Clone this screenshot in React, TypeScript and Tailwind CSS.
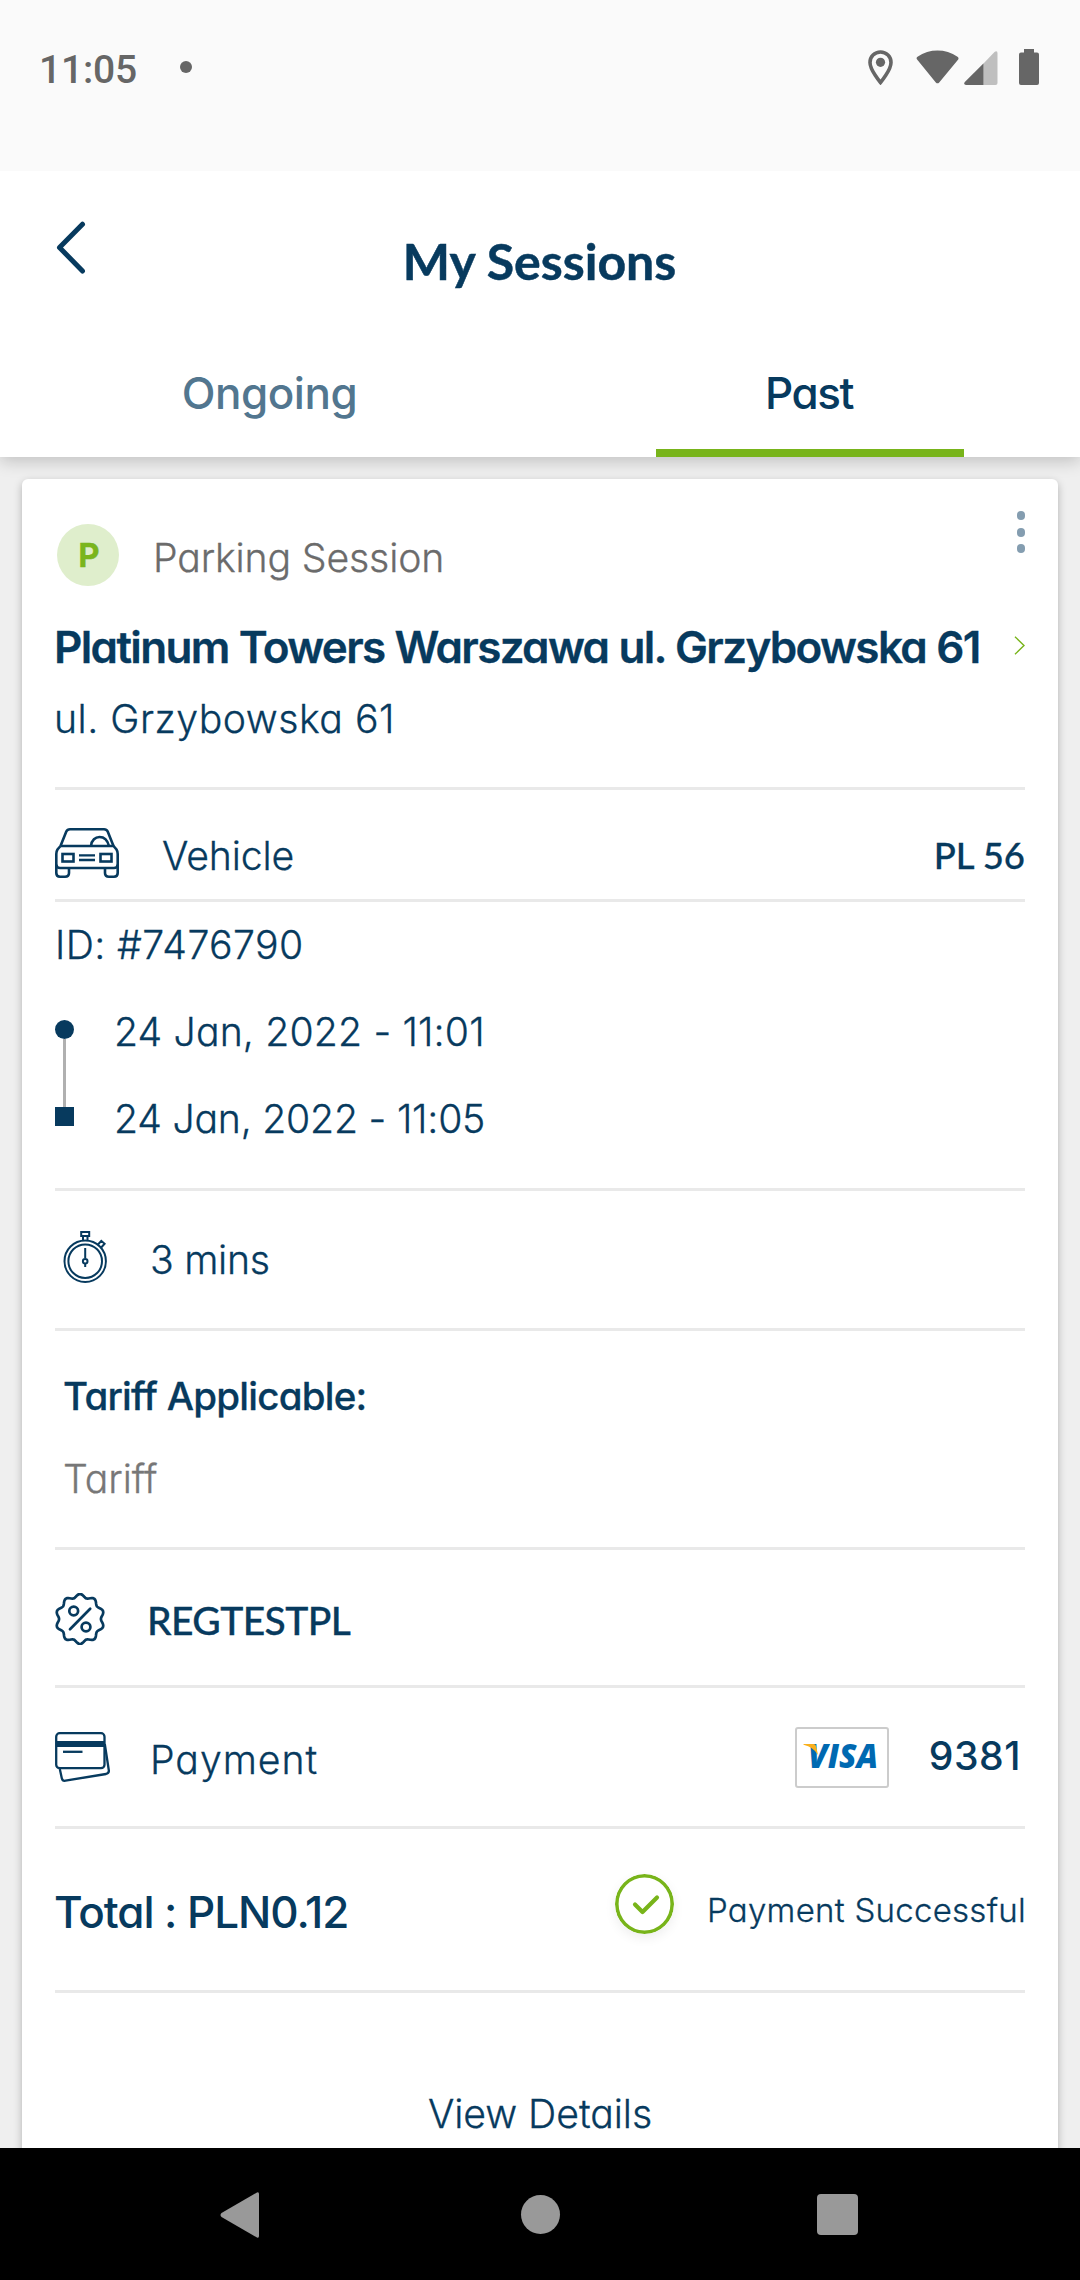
import type { ReactNode } from "react";

const badgePath =
  Array.from({ length: 121 }, (_, i) => {
    const a = (i / 120) * Math.PI * 2;
    const r = 22.6 + 1.7 * Math.cos(10 * a);
    const x = 25 + r * Math.sin(a);
    const y = 26 - r * 1.03 * Math.cos(a);
    return `${i === 0 ? "M" : "L"}${x.toFixed(2)} ${y.toFixed(2)}`;
  }).join("") + "Z";

function StatusBar() {
  return (
    <div className="flex h-[171px] items-start bg-[#fafafa] pl-[39px] pr-[41px] pt-[46px] text-[#666666]">
      <span className="font-['Roboto',sans-serif] text-[39px] font-medium leading-[48px] tracking-[-0.2px]">11:05</span>
      <span className="ml-[43px] mt-[15px] h-3 w-3 rounded-full bg-[#666666]" />
      <svg className="ml-auto mt-1" width="25" height="35" viewBox="0 0 25 35" fill="none">
        <path d="M12.5 2C6.6 2 2 6.6 2 12.4C2 20 12.5 32.5 12.5 32.5S23 20 23 12.4C23 6.6 18.4 2 12.5 2Z" stroke="#666666" strokeWidth="3.6" />
        <circle cx="12.5" cy="12.3" r="4.6" fill="#666666" />
      </svg>
      <svg className="ml-[23px] mt-1" width="43" height="34" viewBox="0 0 43 34" fill="#666666">
        <path d="M1.5 10Q-.4 8.2 1.5 6.8C7.5 2.5 14.5.6 21.5.6S35.5 2.5 41.5 6.8Q43.4 8.2 41.8 10L23.2 32.5Q21.5 34.2 19.8 32.5Z" />
      </svg>
      <svg className="ml-[5px] mt-[5px]" width="34" height="34" viewBox="0 0 34 34">
        <path d="M19 13L30.5 1Q33.5-.8 33.5 2.5V32Q33.5 34 31.5 34H19Z" fill="#bfbfbf" />
        <path d="M19.4 12.5V34H2Q-.8 33.5.8 31Z" fill="#666666" />
      </svg>
      <svg className="ml-[21px] mt-[3px]" width="20" height="36" viewBox="0 0 20 36" fill="#666666">
        <path d="M5 0h10v3.5h3q2 0 2 2V34q0 2-2 2H2q-2 0-2-2V5.5q0-2 2-2h3z" />
      </svg>
    </div>
  );
}

function Header() {
  return (
    <header className="relative bg-white shadow-[0_4px_16px_rgba(0,0,0,0.2)]">
      <div className="grid h-[182px] grid-cols-[1fr_auto_1fr] items-center">
        <svg className="-mt-[29px] ml-[56px]" width="30" height="54" viewBox="0 0 30 54" fill="none">
          <path d="M26.5 3.2L3.5 26.5L26.5 50" stroke="#073a5e" strokeWidth="5" strokeLinecap="round" strokeLinejoin="round" />
        </svg>
        <h1 className="-ml-px -mt-[3px] font-['Lato',sans-serif] text-[50px] font-bold leading-[60px] [-webkit-text-stroke:0.5px]">My Sessions</h1>
      </div>
      <nav className="grid h-[104px] grid-cols-2 text-[44px] font-medium leading-[48px]">
        <div className="-ml-px pt-4 text-center tracking-[-0.47px] text-[#52768f]">Ongoing</div>
        <div className="flex flex-col items-center justify-between pt-4">
          <span className="-ml-0.5 tracking-[-1.4px]">Past</span>
          <span className="h-2 w-[308px] bg-[#78b41a]" />
        </div>
      </nav>
    </header>
  );
}

function Row({ className, children }: { className: string; children: ReactNode }) {
  return <section className={`border-b-[3px] border-[#e9e9e9] ${className}`}>{children}</section>;
}

function CarIcon() {
  return (
    <svg width="64" height="50" viewBox="0 0 64 50" fill="none" stroke="#073a5e" strokeWidth="2.6">
      <path d="M5.5 18L11.3 3.6Q12.3 1.3 15 1.3H49Q51.7 1.3 52.7 3.6L58.5 18" />
      <path d="M5.5 18H58.5L61.5 21.5Q62.7 23.5 62.7 26V45Q62.7 48.7 59 48.7H54Q50 48.7 50 45V40" />
      <path d="M5.5 18L2.5 21.5Q1.3 23.5 1.3 26V45Q1.3 48.7 5 48.7H10Q14 48.7 14 45V40" />
      <path d="M1.3 36.5Q1.5 40 5 40H59Q62.5 40 62.7 36.5" />
      <path d="M36 18C36.5 12 40.5 9 44.5 9S52.5 12 54 18" />
      <rect x="7.5" y="26" width="11" height="7.5" />
      <rect x="45.5" y="26" width="11" height="7.5" />
      <path d="M24 27.3H40M24 32H40" strokeWidth="2.3" />
    </svg>
  );
}

function StopwatchIcon() {
  return (
    <svg className="-mt-[5px] ml-2" width="45" height="52" viewBox="0 0 45 52" fill="none" stroke="#073a5e" strokeWidth="2">
      <circle cx="22.2" cy="30.2" r="20.7" />
      <circle cx="22.2" cy="30.2" r="16.8" />
      <path d="M18.2 1H26.2V5H18.2ZM20 5V9.3M24.5 5V9.3M35 13.5L38.3 9.8L41.6 12.8L38.2 16.5" />
      <path d="M22.2 17V27M22.2 33V36" />
      <circle cx="22.2" cy="30.2" r="2.3" />
    </svg>
  );
}

function DiscountIcon() {
  return (
    <svg className="mt-[3px]" width="50" height="52" viewBox="0 0 50 52" fill="none" stroke="#073a5e" strokeWidth="2.7" strokeLinejoin="round" strokeLinecap="round">
      <path d={badgePath} />
      <circle cx="18.7" cy="18" r="4.4" />
      <circle cx="31" cy="34" r="4.4" />
      <path d="M35.2 15.8L15 36.2" />
    </svg>
  );
}

function CardsIcon() {
  return (
    <svg width="55" height="50" viewBox="0 0 55 50" fill="none" stroke="#073a5e" strokeWidth="2.3">
      <path d="M4.8 37L6.8 46.2Q7.5 49.3 10.5 48.7L51 42Q54.3 41.2 53.8 38.2L49.8 12" />
      <rect x="1.2" y="1.2" width="48.3" height="35" rx="3.5" />
      <path d="M1.2 11.9H49.5" strokeWidth="6" />
      <path d="M8 19.8H27.5" />
    </svg>
  );
}

function VisaLogo() {
  return (
    <svg className="mt-px" width="94" height="61" viewBox="0 0 94 61">
      <rect x="1" y="1" width="92" height="59" rx="2" fill="#ffffff" stroke="#cccccc" strokeWidth="2" />
      <text x="13" y="41" textLength="70" lengthAdjust="spacingAndGlyphs" fill="#0069b1" className="font-['Open_Sans',sans-serif] text-[33px] font-extrabold italic">
        VISA
      </text>
      <path d="M8.5 17H18.5Q20.5 17.2 21 19L23 28Q18.5 20 8.5 17.8Z" fill="#f9b01d" />
    </svg>
  );
}

function SuccessIcon() {
  return (
    <svg className="-mt-[11px] rounded-full shadow-[0_4px_12px_rgba(0,0,0,0.07)]" width="59" height="60" viewBox="0 0 59 60" fill="none" stroke="#78b41a">
      <ellipse cx="29.5" cy="30" rx="27.7" ry="28.2" strokeWidth="3.6" />
      <path d="M20 30.5L27.5 38L42 23.5" strokeWidth="4.2" strokeLinecap="round" strokeLinejoin="round" />
    </svg>
  );
}

function SessionCard() {
  return (
    <article className="mx-[22px] mt-[22px] h-[1700px] rounded-md bg-white px-[33px] text-[39.2px] font-light leading-[48px] shadow-[0_3px_9px_rgba(0,0,0,0.26)] [-webkit-text-stroke:0.3px]">
      <Row className="h-[311px] pt-[33px]">
        <div className="flex h-[76px] items-start">
          <span className="ml-0.5 mt-3 flex h-[62px] w-[62px] items-center justify-center rounded-full bg-[#dfeecc] pl-0.5 text-[33px] font-bold leading-none text-[#7ab51d]">P</span>
          <span className="ml-[34px] mt-[15px] leading-[62px] tracking-[-0.15px] text-[#6b6b6b]">Parking Session</span>
          <span className="-mt-px ml-auto flex flex-col gap-[7.5px]">
            <i className="h-[9px] w-2 rounded-full bg-[#849db0]" />
            <i className="h-[9px] w-2 rounded-full bg-[#849db0]" />
            <i className="h-[9px] w-2 rounded-full bg-[#849db0]" />
          </span>
        </div>
        <div className="mt-[31px] flex h-14 items-center justify-between">
          <h2 className="-ml-px whitespace-nowrap text-[44px] font-semibold leading-[56px] tracking-[-1.65px] [word-spacing:0.6px]">Platinum Towers Warszawa ul. Grzybowska 61</h2>
          <svg className="-mt-1" width="11" height="19" viewBox="0 0 11 19" fill="none">
            <path d="M1 .7L10 9.5L1 18.3" stroke="#78b41a" strokeWidth="1.4" />
          </svg>
        </div>
        <p className="-ml-px mt-5 tracking-[0.5px]">ul. Grzybowska 61</p>
      </Row>

      <Row className="flex h-[112px] items-center pt-[17px]">
        <CarIcon />
        <span className="ml-[43px] pt-[5px] tracking-[-0.15px]">Vehicle</span>
        <span className="ml-auto pt-1 font-['Lato',sans-serif] text-[36.5px] font-medium">PL 56</span>
      </Row>

      <Row className="h-[289px] pt-[19px]">
        <p className="tracking-[0.39px]">ID: #7476790</p>
        <div className="mt-[19px] flex">
          <div className="flex w-[19px] flex-col items-center pt-8">
            <span className="h-[19px] w-[19px] rounded-full bg-[#073a5e]" />
            <span className="h-[68px] w-[3px] bg-[#b0b0b0]" />
            <span className="h-[19px] w-[19px] bg-[#073a5e]" />
          </div>
          <div className="ml-[40px] leading-[87px]">
            <p className="tracking-[0.15px]">24 Jan, 2022 - 11:01</p>
            <p className="tracking-[-0.22px]">24 Jan, 2022 - 11:05</p>
          </div>
        </div>
      </Row>

      <Row className="flex h-[140px] items-center">
        <StopwatchIcon />
        <span className="ml-[42px] tracking-[-0.3px]">3 mins</span>
      </Row>

      <Row className="h-[219px] pl-2 pt-[41px]">
        <h3 className="text-[38.5px] font-medium tracking-[-0.75px]">Tariff Applicable:</h3>
        <p className="mt-[35px] tracking-[-0.09px] text-[#777777]">Tariff</p>
      </Row>

      <Row className="flex h-[138px] items-center">
        <DiscountIcon />
        <span className="ml-[42px] pt-[5px] font-['Lato',sans-serif] text-[39px] font-medium tracking-[-0.57px]">REGTESTPL</span>
      </Row>

      <Row className="flex h-[141px] items-center">
        <CardsIcon />
        <span className="ml-[40px] pt-[5px] tracking-[0.95px]">Payment</span>
        <span className="ml-auto">
          <VisaLogo />
        </span>
        <span className="-mt-[2px] ml-[40px] mr-1 font-medium tracking-[0.5px] [-webkit-text-stroke:0]">9381</span>
      </Row>

      <Row className="flex h-[164px] items-center">
        <span className="-ml-px pt-[5px] text-[44px] font-medium tracking-[-1.05px] [-webkit-text-stroke:0]">Total : PLN0.12</span>
        <span className="ml-auto">
          <SuccessIcon />
        </span>
        <span className="-mr-px ml-[33px] pt-px text-[33px] tracking-[0.27px]">Payment Successful</span>
      </Row>

      <button className="mx-auto mt-[97px] block tracking-[-0.06px]">View Details</button>
    </article>
  );
}

function NavigationBar() {
  return (
    <footer className="relative flex h-[132px] items-start bg-black">
      <svg className="ml-[220px] mt-[44px]" width="39" height="46" viewBox="0 0 39 46" fill="#999999">
        <path d="M37 .5Q39-.3 39 2V44Q39 46.3 37 45.5L1.5 25Q-.5 23 1.5 21Z" />
      </svg>
      <span className="ml-[262px] mt-[47px] h-[39px] w-[39px] rounded-full bg-[#999999]" />
      <span className="ml-[257px] mt-[46px] h-[41px] w-[41px] rounded bg-[#999999]" />
    </footer>
  );
}

export default function App() {
  return (
    <div className="flex h-[2280px] w-[1080px] flex-col overflow-hidden bg-[#efefef] font-['Inter',sans-serif] text-[#073a5e] [font-feature-settings:'cv11']">
      <StatusBar />
      <main className="h-[1977px] overflow-hidden">
        <Header />
        <SessionCard />
      </main>
      <NavigationBar />
    </div>
  );
}
